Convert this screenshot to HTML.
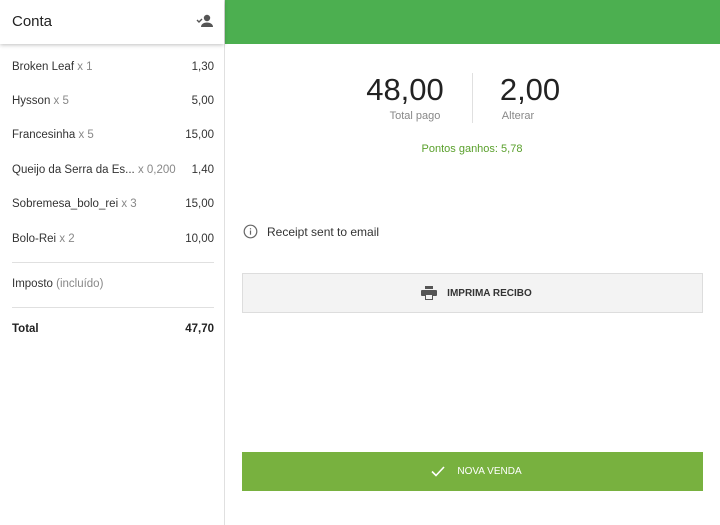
<!DOCTYPE html>
<html><head><meta charset="utf-8"><style>
*{box-sizing:border-box;margin:0;padding:0}
body{width:720px;height:525px;overflow:hidden;font-family:"Liberation Sans",sans-serif;background:#fff;position:relative;color:#222}
.left{position:absolute;left:0;top:0;width:225px;height:525px;border-right:1px solid #e0e0e0;background:#fff}
.hdr{height:44px;box-shadow:0 1px 4px rgba(0,0,0,.25);position:relative;z-index:2;background:#fff}
.hdr span{position:absolute;left:12px;top:13px;font-size:15px;color:#222}
.hdr svg{position:absolute;left:196px;top:14px}
.row{position:absolute;left:12px;width:202px;font-size:11.5px;color:#333}
.row .q{color:#888}
.row .p{position:absolute;right:0;top:0}
.hr{position:absolute;left:12px;width:202px;height:1px;background:#e0e0e0}
.top{position:absolute;left:225px;top:0;right:0;height:44px;background:#4caf50}
.big{position:absolute;font-size:31px;color:#222;text-align:center}
.lbl{position:absolute;font-size:11px;color:#888;text-align:center}
.btn{position:absolute;left:242px;width:461px;height:40px;font-size:10px;font-weight:bold;display:flex;align-items:center;justify-content:center}
</style></head><body>
<div class="left">
 <div class="hdr"><span>Conta</span>
 <svg width="18" height="14" viewBox="0 0 18 14"><circle cx="11" cy="4" r="3.2" fill="#555"/><path d="M5 13c0-3 3-4.5 6-4.5s6 1.5 6 4.5z" fill="#555"/><path d="M1 6l2 2 3-3" stroke="#555" stroke-width="1.4" fill="none"/></svg></div>
 <div class="row" style="top:61px">Broken Leaf <span class="q">x 1</span><span class="p">1,30</span></div>
 <div class="row" style="top:95px">Hysson <span class="q">x 5</span><span class="p">5,00</span></div>
 <div class="row" style="top:129px">Francesinha <span class="q">x 5</span><span class="p">15,00</span></div>
 <div class="row" style="top:164px">Queijo da Serra da Es... <span class="q">x 0,200</span><span class="p">1,40</span></div>
 <div class="row" style="top:198px">Sobremesa_bolo_rei <span class="q">x 3</span><span class="p">15,00</span></div>
 <div class="row" style="top:233px">Bolo-Rei <span class="q">x 2</span><span class="p">10,00</span></div>
 <div class="hr" style="top:262px"></div>
 <div class="row" style="top:278px">Imposto <span class="q">(incluído)</span></div>
 <div class="hr" style="top:307px"></div>
 <div class="row" style="top:323px;font-weight:bold;color:#222">Total<span class="p">47,70</span></div>
</div>
<div class="top"></div>
<div class="big" style="left:355px;width:100px;top:72px">48,00</div>
<div class="lbl" style="left:355px;width:120px;top:110px">Total pago</div>
<div style="position:absolute;left:472px;top:73px;width:1px;height:50px;background:#e0e0e0"></div>
<div class="big" style="left:490px;width:80px;top:72px">2,00</div>
<div class="lbl" style="left:478px;width:80px;top:110px">Alterar</div>
<div style="position:absolute;left:380px;width:184px;top:143px;font-size:11px;color:#5aa02c;text-align:center">Pontos ganhos: 5,78</div>
<svg style="position:absolute;left:243px;top:224px" width="15" height="15" viewBox="0 0 15 15"><circle cx="7.5" cy="7.5" r="6.3" fill="none" stroke="#666" stroke-width="1.2"/><rect x="6.9" y="6.5" width="1.2" height="4.2" fill="#666"/><rect x="6.9" y="4.2" width="1.2" height="1.2" fill="#666"/></svg>
<div style="position:absolute;left:267px;top:225px;font-size:12px;color:#333">Receipt sent to email</div>
<div class="btn" style="top:273px;background:#f3f3f3;border:1px solid #ddd;color:#333;padding-left:8px">
 <svg width="16" height="14" viewBox="0 0 16 14" style="margin-right:10px"><rect x="4" y="0" width="8" height="3" fill="#555"/><rect x="0" y="4" width="16" height="6" rx="1" fill="#555"/><rect x="4" y="8" width="8" height="6" fill="#555"/><rect x="5" y="9" width="6" height="4" fill="#f3f3f3"/></svg>IMPRIMA RECIBO</div>
<div class="btn" style="top:452px;height:39px;background:#78b13f;color:#fff;font-weight:normal;padding-left:8px">
 <svg width="14" height="11" viewBox="0 0 14 11" style="margin-right:12px"><path d="M1 5.5l4 4L13 1" stroke="#fff" stroke-width="1.6" fill="none"/></svg>NOVA VENDA</div>
</body></html>
